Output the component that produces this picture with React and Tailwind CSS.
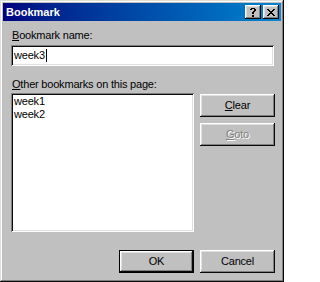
import React from "react";

const raised =
  "shadow-[inset_-1px_-1px_#0a0a0a,inset_1px_1px_#ffffff,inset_-2px_-2px_#808080,inset_2px_2px_#dfdfdf]";
const sunken =
  "shadow-[inset_1px_1px_#808080,inset_-1px_-1px_#ffffff,inset_2px_2px_#0a0a0a,inset_-2px_-2px_#dfdfdf]";

function CloseGlyph() {
  const rows = [
    "XX....XX",
    ".XX..XX.",
    "..XXXX..",
    "...XX...",
    "..XXXX..",
    ".XX..XX.",
    "XX....XX",
  ];
  const rects = [];
  rows.forEach((r, y) =>
    r.split("").forEach((c, x) => {
      if (c === "X") rects.push(<rect key={`${x}-${y}`} x={x} y={y} width="1" height="1" />);
    })
  );
  return (
    <svg width="8" height="7" viewBox="0 0 8 7" shapeRendering="crispEdges" fill="#000">
      {rects}
    </svg>
  );
}

function HelpGlyph() {
  const rows = [
    ".XXXX.",
    "XX..XX",
    "....XX",
    "...XX.",
    "..XX..",
    "..XX..",
    "......",
    "..XX..",
    "..XX..",
  ];
  const rects = [];
  rows.forEach((r, y) =>
    r.split("").forEach((c, x) => {
      if (c === "X") rects.push(<rect key={`${x}-${y}`} x={x} y={y} width="1" height="1" />);
    })
  );
  return (
    <svg width="6" height="9" viewBox="0 0 6 9" shapeRendering="crispEdges" fill="#000">
      {rects}
    </svg>
  );
}

function Button({ children, className = "", disabled = false, isDefault = false }) {
  const inner = (
    <div
      className={`flex items-center justify-center bg-[#c0c0c0] ${raised} ${
        isDefault ? "w-full h-full" : "w-[75px] h-[23px]"
      } ${disabled ? "text-[#808080] [text-shadow:1px_1px_0_#ffffff]" : "text-black"}`}
    >
      {children}
    </div>
  );
  if (isDefault) {
    return <div className={`w-[75px] h-[23px] border border-black ${className}`}>{inner}</div>;
  }
  return <div className={className}>{inner}</div>;
}

export default function App() {
  return (
    <div
      className={`w-[284px] h-[282px] bg-[#c0c0c0] p-[3px] flex flex-col font-['Liberation_Sans',Arial,sans-serif] text-[11px] leading-[13px] text-black shadow-[inset_-1px_-1px_#0a0a0a,inset_1px_1px_#dfdfdf,inset_-2px_-2px_#808080,inset_2px_2px_#ffffff]`}
    >
      {/* Title bar */}
      <div className="h-[18px] flex items-center justify-between bg-linear-to-r from-[#000080] to-[#1084d0] pl-[3px] pr-[2px]">
        <span className="text-white font-bold text-[11px] leading-[13px]">Bookmark</span>
        <div className="flex gap-[2px]">
          <div className={`w-[16px] h-[14px] bg-[#c0c0c0] ${raised} flex items-center justify-center`}>
            <HelpGlyph />
          </div>
          <div className={`w-[16px] h-[14px] bg-[#c0c0c0] ${raised} flex items-center justify-center`}>
            <CloseGlyph />
          </div>
        </div>
      </div>

      {/* Content */}
      <div className="flex flex-col pl-[8px] pr-[6px] tracking-[-0.2px]">
        <div className="mt-[8px] h-[13px] pl-[1px]">
          <u className="underline-offset-[1px]">B</u>ookmark name:
        </div>
        <div className={`mt-[3px] w-[263px] h-[21px] bg-white ${sunken} flex items-center pl-[3px]`}>
          <span>week3</span>
          <span className="ml-[1px] w-[1px] h-[13px] bg-black" />
        </div>

        <div className="mt-[12px] h-[13px] pl-[1px]">
          <u className="underline-offset-[1px]">O</u>ther bookmarks on this page:
        </div>

        <div className="mt-[2px] flex gap-[6px]">
          <div className={`w-[183px] h-[139px] bg-white ${sunken} p-[2px] flex flex-col`}>
            <div className="h-[13px] pl-[1px]">week1</div>
            <div className="h-[13px] pl-[1px]">week2</div>
          </div>
          <div className="flex flex-col">
            <Button className="mt-[1px]">
              <span>
                <u className="underline-offset-[1px]">C</u>lear
              </span>
            </Button>
            <Button className="mt-[6px]" disabled>
              <span>
                <u className="underline-offset-[1px]">G</u>oto
              </span>
            </Button>
          </div>
        </div>

        <div className="mt-[18px] flex justify-end gap-[6px]">
          <Button isDefault>
            <span>OK</span>
          </Button>
          <Button>
            <span>Cancel</span>
          </Button>
        </div>
      </div>
    </div>
  );
}
